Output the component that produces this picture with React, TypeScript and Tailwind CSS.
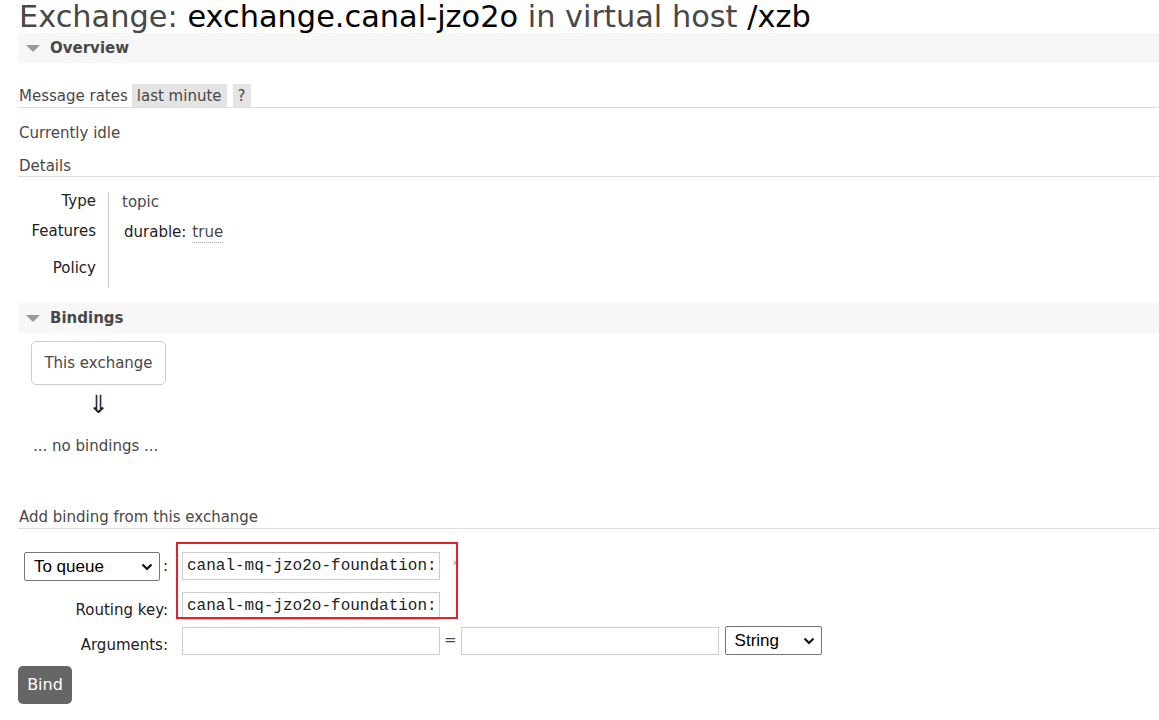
const font = { fontFamily: '"DejaVu Sans", Verdana, sans-serif' };

function SectionBar({ title }: { title: string }) {
  return (
    <div className="flex h-[30px] items-center bg-[#f7f7f7] pl-[8px]">
      <span className="mr-[10px] mt-[1px] h-0 w-0 border-x-[7px] border-t-[7px] border-x-transparent border-t-[#999]" />
      <span className="text-[15px] font-bold text-[#484848]">{title}</span>
    </div>
  );
}

function Select({ label, width }: { label: string; width: string }) {
  return (
    <div
      className={`flex h-[29px] items-center justify-between rounded-[2px] border border-[#767676] bg-white pl-[9px] pr-[6px] text-[17px] text-black ${width}`}
      style={{ fontFamily: '"Liberation Sans", Arial, sans-serif' }}
    >
      <span>{label}</span>
      <svg width="12" height="8" viewBox="0 0 12 8" fill="none">
        <path d="M1.5 1.5 L6 6 L10.5 1.5" stroke="#111" strokeWidth="2.2" />
      </svg>
    </div>
  );
}

function TextBox({ value }: { value?: string }) {
  return (
    <div
      className="flex h-[28px] w-[258px] items-center overflow-hidden whitespace-nowrap border border-[#ccc] bg-white pl-[4px] text-[16px] text-[#222]"
      style={{ fontFamily: '"Liberation Mono", "Courier New", monospace' }}
    >
      {value}
    </div>
  );
}

export default function App() {
  return (
    <div className="min-h-[720px] bg-white pl-[18px] text-[15px] text-[#484848]" style={font}>
      <h1 className="ml-[1px] h-[33px] text-[30.4px] leading-[33px] text-[#484848]">
        Exchange: <span className="text-black">exchange.canal-jzo2o</span> in virtual host{' '}
        <span className="text-black">/xzb</span>
      </h1>

      <SectionBar title="Overview" />

      <div className="mt-[21px] flex h-[24px] items-stretch border-b border-[#ddd] leading-[21px]">
        <span className="pl-[1px] pr-[4px] pt-[2px]">Message rates</span>
        <span className="bg-[#e4e4e4] px-[5px] pt-[2px]">last minute</span>
        <span className="ml-[6px] bg-[#e4e4e4] px-[5px] pt-[2px]">?</span>
      </div>

      <p className="mt-[15px] pl-[1px] leading-[20px]">Currently idle</p>

      <p className="mt-[13px] h-[21px] border-b border-[#ddd] pl-[1px] leading-[20px]">Details</p>

      <div className="mt-[15px] grid grid-cols-[90px_1px_auto]">
        <div className="flex flex-col items-end pr-[12px] leading-[20px] text-[#222]">
          <span className="mt-[-1px]">Type</span>
          <span className="mt-[10px]">Features</span>
          <span className="mt-[17px]">Policy</span>
        </div>
        <div className="h-[96px] bg-[#ccc]" />
        <div className="flex flex-col pl-[13px] leading-[20px]">
          <span>topic</span>
          <span className="mt-[10px] flex items-baseline">
            <span className="ml-[2px] text-[#222]">durable:</span>
            <span className="ml-[6px] border-b border-dotted border-[#aaa]">true</span>
          </span>
        </div>
      </div>

      <div className="mt-[15px]">
        <SectionBar title="Bindings" />
      </div>

      <div className="ml-[13px] mt-[8px] flex w-[135px] flex-col items-center">
        <div className="flex h-[44px] w-[135px] items-center justify-center rounded-[5px] border border-[#ccc]">
          This exchange
        </div>
        <div className="mt-[4px] text-[25px] leading-[32px] text-[#222]">⇓</div>
      </div>

      <p className="ml-[15px] mt-[15px] leading-[20px]">... no bindings ...</p>

      <p className="mt-[51px] h-[22px] border-b border-[#ddd] pl-[1px] leading-[20px]">
        Add binding from this exchange
      </p>

      <div className="relative mt-[23px] grid grid-cols-[150px_auto] gap-x-[14px] text-[#222]">
        <div className="flex h-[29px] items-center justify-end">
          <Select label="To queue" width="w-[136px]" />
          <span className="ml-[3px]">:</span>
        </div>
        <div className="flex items-start">
          <TextBox value="canal-mq-jzo2o-foundation:" />
          <span className="ml-[13px] mt-[7px] text-[12px] leading-[12px] text-[#f08080]">*</span>
        </div>

        <div className="mt-[11px] flex h-[28px] items-center justify-end pt-[8px]">Routing key:</div>
        <div className="mt-[11px]">
          <TextBox value="canal-mq-jzo2o-foundation:" />
        </div>

        <div className="mt-[6px] flex h-[28px] items-center justify-end pt-[10px]">Arguments:</div>
        <div className="mt-[6px] flex items-center">
          <TextBox />
          <span className="mx-[4px] text-[#484848]">=</span>
          <TextBox />
          <div className="ml-[6px]">
            <Select label="String" width="w-[97px]" />
          </div>
        </div>

        <div className="pointer-events-none absolute left-[158px] top-[-10px] h-[77px] w-[282px] border-2 border-[#e3212d]" />
      </div>

      <button className="mt-[11px] h-[38px] w-[54px] rounded-[5px] bg-[#666] text-[16px] text-white" style={font}>
        Bind
      </button>
    </div>
  );
}
